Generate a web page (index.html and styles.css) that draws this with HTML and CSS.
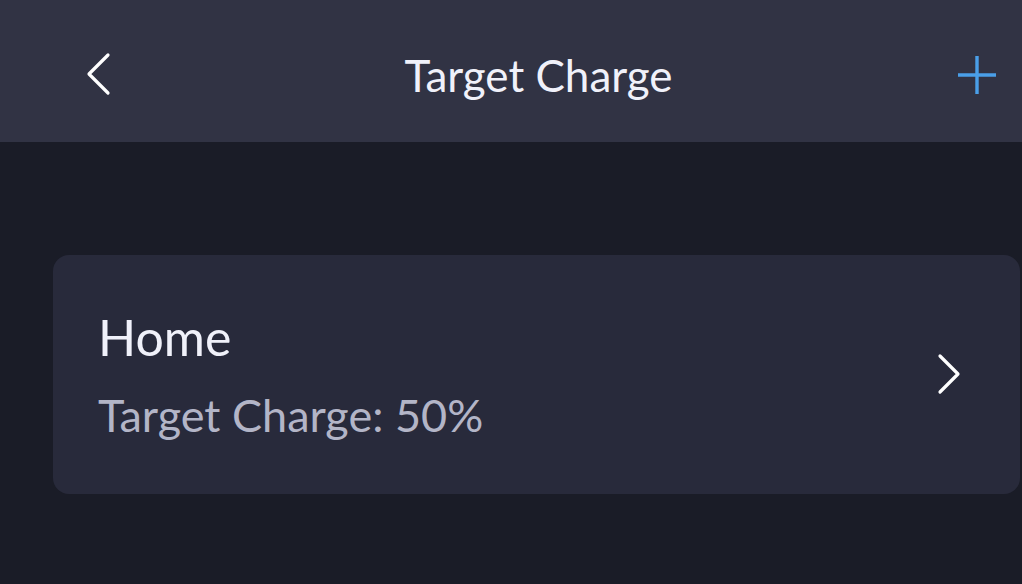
FILE: index.html
```html
<!DOCTYPE html>
<html lang="en">
<head>
  <meta charset="UTF-8" />
  <meta name="viewport" content="width=device-width, initial-scale=1.0"/>
  <title>Target Charge</title>
  <link rel="stylesheet" href="styles.css">
</head>
<body>
  <header class="top-bar">
    <button class="icon-btn back-btn" aria-label="Back">
      <svg width="28" height="44" viewBox="0 0 28 44">
        <path d="M24 3 L5 22 L24 41" fill="none" stroke="#ffffff" stroke-width="3.2" stroke-linecap="round" stroke-linejoin="round"/>
      </svg>
    </button>
    <h1 class="title">Target Charge</h1>
    <button class="icon-btn add-btn" aria-label="Add">
      <svg width="42" height="42" viewBox="0 0 42 42">
        <path d="M21 2 V40 M2 21 H40" fill="none" stroke="#4a9fe8" stroke-width="3.4"/>
      </svg>
    </button>
  </header>

  <main class="content">
    <div class="location-card">
      <div class="location-info">
        <h2 class="location-name">Home</h2>
        <p class="location-detail">Target Charge: 50%</p>
      </div>
      <svg class="chevron" width="28" height="44" viewBox="0 0 28 44">
        <path d="M5 3 L23 21 L5 39" fill="none" stroke="#ffffff" stroke-width="3.2" stroke-linecap="round" stroke-linejoin="round"/>
      </svg>
    </div>
  </main>
</body>
</html>
```

FILE: styles.css
```css
* {
  box-sizing: border-box;
  margin: 0;
  padding: 0;
}

body {
  font-family: 'Lato', sans-serif;
  background-color: #1a1c27;
  color: #f0f1fa;
  min-height: 100vh;
  overflow: hidden;
}

.top-bar {
  height: 142px;
  background: #313344;
  display: flex;
  align-items: center;
  padding: 0 24px 0 84px;
}

.icon-btn {
  background: none;
  border: none;
  cursor: pointer;
  display: flex;
  align-items: center;
}

.back-btn {
  margin-top: 6px;
}

.add-btn {
  margin-top: 8px;
}

.title {
  flex: 1;
  text-align: center;
  font-size: 44px;
  line-height: 1;
  font-weight: 400;
  color: #f0f1fa;
  padding-left: 9px;
  margin-top: 8px;
}

.content {
  padding: 113px 0 0 53px;
}

.location-card {
  background: #282a3b;
  border-radius: 16px;
  height: 239px;
  display: flex;
  align-items: center;
  padding: 0 57px 0 45px;
  margin-right: 2px;
}

.location-info {
  flex: 1;
  display: flex;
  flex-direction: column;
  gap: 31px;
}

.location-name {
  font-size: 50px;
  line-height: 1;
  font-weight: 400;
  color: #f0f1fa;
}

.location-detail {
  font-size: 45px;
  line-height: 1;
  color: #b3b5c7;
}
```
